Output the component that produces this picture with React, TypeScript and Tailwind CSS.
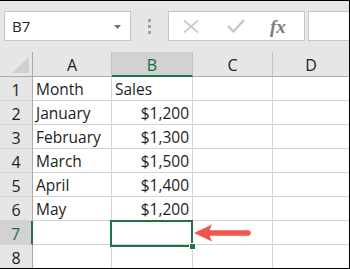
import React from 'react';

const cols = [
  { key: 'A', w: 'w-[79px]' },
  { key: 'B', w: 'w-[81px]' },
  { key: 'C', w: 'w-[80px]' },
  { key: 'D', w: 'flex-1' },
];

const rows: [string, string][] = [
  ['Month', 'Sales'],
  ['January', '$1,200'],
  ['February', '$1,300'],
  ['March', '$1,500'],
  ['April', '$1,400'],
  ['May', '$1,200'],
  ['', ''],
  ['', ''],
];

export default function App() {
  return (
    <div className="relative w-[350px] h-[269px] overflow-hidden border-t border-r border-b border-black bg-white font-['Open_Sans',sans-serif] text-[#222]">
      {/* formula bar */}
      <div className="flex h-[51px] items-start bg-[#e6e6e6] pt-[10px] pl-[4px]">
        <div className="relative flex h-[30px] w-[127px] items-center border border-[#c6c6c6] bg-white pl-[7px] text-[15px] pt-[1px]">
          B7
          <svg className="absolute right-[9px] top-[13px]" width="7" height="4" viewBox="0 0 7 4">
            <path d="M0 0 H7 L3.5 4 Z" fill="#707070" />
          </svg>
        </div>
        <div className="flex h-[30px] w-[37px] flex-col items-center justify-center gap-[3px]">
          <div className="h-[3px] w-[3px] bg-[#a0a0a0]" />
          <div className="h-[3px] w-[3px] bg-[#a0a0a0]" />
          <div className="h-[3px] w-[3px] bg-[#a0a0a0]" />
        </div>
        <div className="flex h-[30px] w-[137px] items-center border border-[#c6c6c6] bg-white">
          <svg className="ml-[14px]" width="16" height="13" viewBox="0 0 16 13">
            <path d="M1 0.5 L15 12.5 M15 0.5 L1 12.5" stroke="#c3c3c3" strokeWidth="1.6" />
          </svg>
          <svg className="ml-[28px]" width="18" height="14" viewBox="0 0 18 14">
            <path d="M1 7 L6.5 12.5 L17 1" stroke="#c3c3c3" strokeWidth="2.2" fill="none" />
          </svg>
          <span className="ml-[25px] font-['Liberation_Serif',serif] text-[19px] font-bold italic text-[#7c7c7c] leading-none">
            fx
          </span>
        </div>
        <div className="ml-[3px] h-[30px] flex-1 border border-r-0 border-[#c6c6c6] bg-white" />
      </div>

      {/* column headers */}
      <div className="flex h-[25px] bg-[#e6e6e6]">
        <div className="relative w-[33px] border-r border-b border-[#ababab]">
          <svg className="absolute left-[12px] top-[5px]" width="17" height="16" viewBox="0 0 17 16">
            <path d="M17 0 V16 H0 Z" fill="#cfcfcf" />
          </svg>
        </div>
        {cols.map((c) => (
          <div
            key={c.key}
            className={`${c.w} flex items-center justify-center pt-[2px] text-[16px] ${
              c.key === 'B'
                ? 'bg-[#d2d2d2] border-b-2 border-b-[#217346] text-[#1d6b42]'
                : 'border-b border-b-[#ababab]'
            } ${c.key !== 'D' ? 'border-r border-r-[#c3c3c3]' : ''}`}
          >
            {c.key}
          </div>
        ))}
      </div>

      {/* rows */}
      {rows.map((r, i) => {
        const n = i + 1;
        const sel = n === 7;
        return (
          <div key={n} className="flex h-[24px]">
            <div
              className={`flex w-[33px] items-center justify-center pt-[2px] text-[16px] border-b border-[#d4d4d4] ${
                sel
                  ? 'bg-[#d2d2d2] border-r-2 border-r-[#217346] text-[#1d6b42]'
                  : 'bg-[#e6e6e6] border-r border-r-[#ababab]'
              }`}
            >
              {n}
            </div>
            <div className="flex w-[79px] items-center border-r border-b border-[#d4d4d4] pl-[3px] pt-[2px] text-[15.5px]">
              {r[0]}
            </div>
            <div
              className={`flex w-[81px] items-center border-r border-b border-[#d4d4d4] pr-[3px] pt-[2px] text-[15.5px] ${
                n === 1 ? 'justify-start pl-[3px]' : 'justify-end'
              }`}
            >
              {r[1]}
            </div>
            <div className="w-[80px] border-r border-b border-[#d4d4d4]" />
            <div className="flex-1 border-b border-[#d4d4d4]" />
          </div>
        );
      })}

      {/* selection overlay B7 */}
      <div className="absolute left-[110px] top-[219px] h-[27px] w-[83px] border-2 border-[#217346]" />
      <div className="absolute left-[189px] top-[242px] h-[5px] w-[5px] border border-white bg-[#217346] box-content" />

      {/* red arrow */}
      <svg className="absolute left-[193px] top-[222px]" width="60" height="21" viewBox="0 0 60 21">
        <path d="M1 10 L19 1.5 Q14 10 19 18.5 Z" fill="#f2564c" />
        <line x1="14" y1="10" x2="55" y2="10" stroke="#f2564c" strokeWidth="5.5" strokeLinecap="round" />
      </svg>
    </div>
  );
}
